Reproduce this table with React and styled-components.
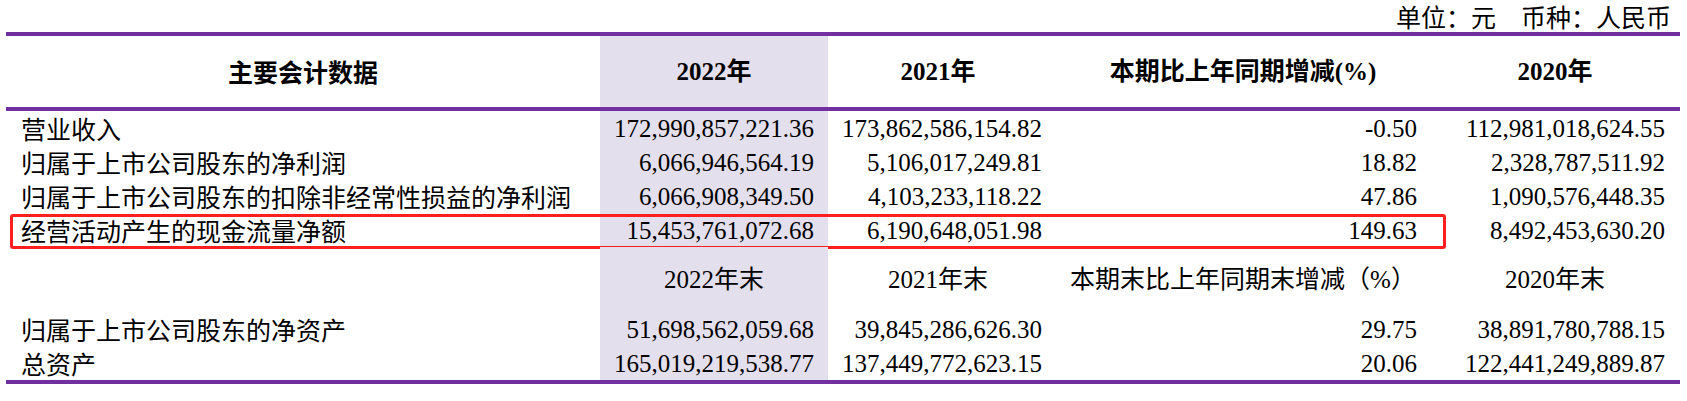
import React from 'react'
import styled, { createGlobalStyle } from 'styled-components';

const GlobalStyle = createGlobalStyle`
    body {
        margin: 0;
        background: #fff;
        color: #000;
        font-family: "Liberation Serif", "Noto Sans CJK SC", serif;
    }
`;

const COLS = '594px 228px 220px 390px 242px';

const Page = styled.div`
    width: 1687px;
    height: 401px;
    background: #fff;
`;

const Note = styled.div`
    height: 32px;
    display: flex;
    align-items: center;
    justify-content: flex-end;
    padding-right: 16px;
    font-size: 25px;
    line-height: 1;
    font-family: "Noto Sans CJK SC", sans-serif;
`;

const Table = styled.div`
    margin-left: 6px;
    width: 1674px;
    border-top: 4px solid #7030a0;
    border-bottom: 4px solid #7030a0;
`;

const Row = styled.div`
    position: relative;
    display: grid;
    grid-template-columns: ${COLS};
    height: ${props => props.$h}px;
    border-bottom: ${props => props.$line ? '4px solid #7030a0' : 'none'};
`;

const Cell = styled.div`
    display: flex;
    align-items: center;
    justify-content: ${props => props.$align === 'left' ? 'flex-start' : props.$align === 'right' ? 'flex-end' : 'center'};
    padding-left: ${props => props.$pl || 0}px;
    padding-right: ${props => props.$pr || 0}px;
    background: ${props => props.$shade ? '#e4dfec' : 'transparent'};
    font-size: 25px;
    line-height: 1;
    white-space: nowrap;
`;

const HeadCell = styled(Cell)`
    font-weight: bold;
`;

const Label = styled.span`
    font-family: "Noto Sans CJK SC", sans-serif;
`;

const Highlight = styled.div`
    position: absolute;
    left: 4px;
    top: 1px;
    width: 1436px;
    height: 35px;
    box-sizing: border-box;
    border: 3px solid #ff1f1f;
    border-radius: 3px;
    pointer-events: none;
`;

// right padding of the numeric columns
const PAD = [14, 6, 21, 15];

const rows = [
    ['营业收入', '172,990,857,221.36', '173,862,586,154.82', '-0.50', '112,981,018,624.55'],
    ['归属于上市公司股东的净利润', '6,066,946,564.19', '5,106,017,249.81', '18.82', '2,328,787,511.92'],
    ['归属于上市公司股东的扣除非经常性损益的净利润', '6,066,908,349.50', '4,103,233,118.22', '47.86', '1,090,576,448.35'],
    ['经营活动产生的现金流量净额', '15,453,761,072.68', '6,190,648,051.98', '149.63', '8,492,453,630.20', true],
];

const assets = [
    ['归属于上市公司股东的净资产', '51,698,562,059.68', '39,845,286,626.30', '29.75', '38,891,780,788.15'],
    ['总资产', '165,019,219,538.77', '137,449,772,623.15', '20.06', '122,441,249,889.87'],
];

const DataRow = ({ data }) => (
    <Row $h={34}>
        <Cell $align="left" $pl={15}><Label>{data[0]}</Label></Cell>
        {data.slice(1, 5).map((v, i) => (
            <Cell key={i} $align="right" $pr={PAD[i]} $shade={i === 0}>{v}</Cell>
        ))}
        {data[5] && <Highlight />}
    </Row>
);

const App = () => {
  return (
    <Page>
        <GlobalStyle />
        <Note>单位：元　币种：人民币</Note>
        <Table>
            <Row $h={71} $line>
                <HeadCell><Label>主要会计数据</Label></HeadCell>
                <HeadCell $shade>2022年</HeadCell>
                <HeadCell>2021年</HeadCell>
                <HeadCell>本期比上年同期增减(%)</HeadCell>
                <HeadCell $pr={8}>2020年</HeadCell>
            </Row>
            {rows.map((r, i) => <DataRow key={i} data={r} />)}
            <Row $h={65}>
                <Cell />
                <Cell $shade>2022年末</Cell>
                <Cell>2021年末</Cell>
                <Cell>本期末比上年同期末增减（%）</Cell>
                <Cell $pr={8}>2020年末</Cell>
            </Row>
            {assets.map((r, i) => <DataRow key={i} data={r} />)}
        </Table>
    </Page>
  )
}

export default App
